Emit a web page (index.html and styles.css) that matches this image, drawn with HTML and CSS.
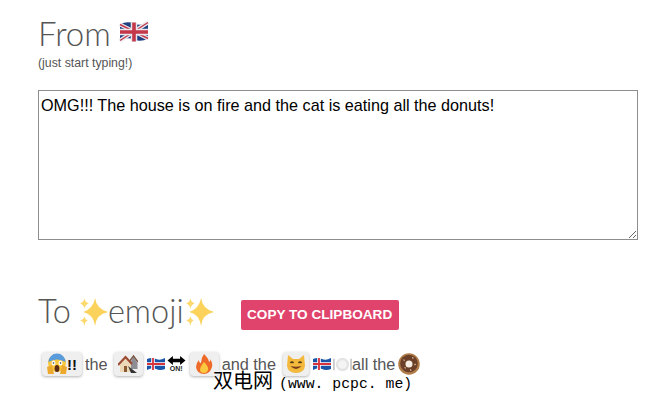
FILE: index.html
```html
<!DOCTYPE html>
<html lang="en">
<head>
  <meta charset="UTF-8" />
  <title>Emoji translate</title>
  <link rel="stylesheet" href="styles.css">
</head>
<body>
  <div class="container">
    <h1 class="from-title">From
      <svg class="flag-uk" viewBox="0 0 30 22"><path d="M1 4 Q8 0 15 3 T29 2 V18 Q22 22 15 19 T1 20 Z" fill="#1f3f7f"/><path d="M1 4 L29 18 M29 2 L1 20" stroke="#e8e8ee" stroke-width="4"/><path d="M1 4 L29 18 M29 2 L1 20" stroke="#c5384a" stroke-width="1.4"/><path d="M15 2 V21 M1 11.5 H29" stroke="#e8e8ee" stroke-width="6.5"/><path d="M15 2 V21 M1 11.5 H29" stroke="#c5384a" stroke-width="3.6"/></svg>
    </h1>
    <p class="hint">(just start typing!)</p>
    <textarea class="source">OMG!!! The house is on fire and the cat is eating all the donuts!</textarea>

    <div class="to-row">
      <h2 class="to-title">To<svg class="sparkle sparkle-first" viewBox="0 0 28 28"><use href="#sparkles"/></svg>emoji<svg class="sparkle" viewBox="0 0 28 28"><use href="#sparkles"/></svg></h2>
      <button class="copy-button">COPY TO CLIPBOARD</button>
    </div>

    <div class="output">
      <span class="key key-scream">
        <svg class="emoji-scream" viewBox="0 0 20 22"><circle cx="10" cy="10" r="9" fill="#f8c93e"/><path d="M1.500 9 A8.500 8.500 0 0 1 18.500 9 Q10 4 1.500 9Z" fill="#5a9bdc"/><ellipse cx="6.500" cy="10" rx="2" ry="2.600" fill="#fff"/><ellipse cx="13.500" cy="10" rx="2" ry="2.600" fill="#fff"/><circle cx="6.500" cy="10" r=".8" fill="#333"/><circle cx="13.500" cy="10" r=".8" fill="#333"/><ellipse cx="10" cy="15.500" rx="2.400" ry="3.500" fill="#5b2b16"/><path d="M0 14 L5 12 L7 21 L1 21Z M20 14 L15 12 L13 21 L19 21Z" fill="#eda92e"/></svg><b class="bangs">!!</b>
      </span>
      <span class="word word-the">the</span>
      <span class="key key-house">
        <svg class="emoji" viewBox="0 0 20 20"><path d="M12 9 L15.500 3 L19.500 9 V15 H12Z" fill="#8d8d96"/><path d="M11 8 L15.500 2 L20 8" fill="none" stroke="#7a5a4a" stroke-width="1.600"/><path d="M2 10 L8 4 L13 10 V18 H2Z" fill="#ecd9b8"/><path d="M0 11 L7.500 3 L14 10" fill="none" stroke="#9c4a32" stroke-width="2.200"/><rect x="6" y="12" width="3" height="6" fill="#8a5a32"/><path d="M10 12 L19 19 H13Z" fill="#333"/></svg>
      </span>
      <svg class="flag" viewBox="1 0 18 14"><path d="M1 2 Q6 0 10 2 T19 1 V12 Q14 14 10 12 T1 13Z" fill="#1a55a8"/><path d="M7 1 V13 M1 7 H19" stroke="#fff" stroke-width="3.600"/><path d="M7 1 V13 M1 7 H19" stroke="#d8323c" stroke-width="1.800"/></svg>
      <span class="on-arrow"><svg class="arrow" viewBox="0 0 20 10"><path d="M0 5 L6 0 V3 H14 V0 L20 5 L14 10 V7 H6 V10Z" fill="#000"/></svg><span class="on-text">ON!</span></span>
      <span class="key key-fire">
        <svg class="emoji" viewBox="0 0 20 20"><path d="M10 0 Q15 5 15 8 Q17 7 16 5 Q19 9 18 13 Q16 20 10 20 Q3 20 2 13 Q2 9 5 6 Q5 9 7 9 Q7 4 10 0Z" fill="#ee6a28"/><path d="M10 8 Q15 13 14 16 Q13 19 10 19 Q6 19 6 16 Q6 13 10 8Z" fill="#fbc93f"/></svg>
      </span>
      <span class="word word-and">and the</span>
      <span class="key key-cat">
        <svg class="emoji" viewBox="0 0 20 20"><path d="M2 1 L7 5 H13 L18 1 L19 12 Q18 19 10 19 Q2 19 1 12Z" fill="#f2b93c"/><path d="M4.500 9 Q6 7 7.500 9 M12.500 9 Q14 7 15.500 9" fill="none" stroke="#4a3216" stroke-width="1.400"/><path d="M4.500 12 Q10 18 15.500 12 Q10 13.500 4.500 12Z" fill="#7a3a1c"/></svg>
      </span>
      <svg class="flag" viewBox="1 0 18 14"><path d="M1 2 Q6 0 10 2 T19 1 V12 Q14 14 10 12 T1 13Z" fill="#1a55a8"/><path d="M7 1 V13 M1 7 H19" stroke="#fff" stroke-width="3.600"/><path d="M7 1 V13 M1 7 H19" stroke="#d8323c" stroke-width="1.800"/></svg>
      <svg class="emoji-plate" viewBox="0 0 20 20"><path d="M1 4 V16 M19 4 V16" stroke="#aaa" stroke-width="1.200"/><circle cx="10" cy="10" r="7" fill="#e4e4e4"/><circle cx="10" cy="10" r="4.500" fill="#f4f4f4"/></svg>
      <span class="word">all the</span>
      <svg class="emoji-donut" viewBox="0 0 20 20"><circle cx="10" cy="10" r="9.800" fill="#b07c48"/><circle cx="10" cy="9.500" r="8" fill="#6a4028"/><circle cx="10" cy="10" r="3.200" fill="#f6eee2"/><path d="M5 6 L6 7 M13 4 L14 5 M15 11 L16 10 M6 13 L7 14 M11 15 L12 16" stroke="#e8c8a0" stroke-width="1"/></svg>
    </div>
  </div>

  <div class="watermark">双电网<span class="watermark-url">(www. pcpc. me)</span></div>

  <svg class="defs" width="0" height="0">
    <symbol id="sparkles" viewBox="0 0 28 28">
      <path d="M16 1 Q17 11 28 14 Q17 16 16 27 Q14 16 5 14 Q14 11 16 1Z" fill="#fbd35c"/>
      <path d="M6 1 Q6.500 5 10 6 Q6.500 7 6 11 Q5.500 7 2 6 Q5.500 5 6 1Z" fill="#fcd96f"/>
      <path d="M6 18 Q6.500 21 9 22 Q6.500 23 6 27 Q5.500 23 2 22 Q5.500 21 6 18Z" fill="#fcd96f"/>
    </symbol>
  </svg>
</body>
</html>
```

FILE: styles.css
```css
html, body {
  height: 404px;
  overflow: hidden;
}
body {
  margin: 0;
  padding: 0;
  font-family: "Lato", "Liberation Sans", sans-serif;
  background: #fff;
  color: #555;
  position: relative;
}
.container {
  width: 600px;
  padding: 11px 0 0 38px;
}
.from-title {
  margin: 0 0 1px;
  font-size: 33px;
  line-height: 44px;
  font-weight: 300;
  color: #555;
  display: flex;
  align-items: center;
  gap: 8px;
}
.flag-uk {
  width: 30px;
  height: 23px;
  margin-bottom: 3px;
}
.hint {
  margin: 0;
  font-family: "Liberation Sans", sans-serif;
  font-size: 12.3px;
  line-height: 14px;
  color: #555;
}
.source {
  display: block;
  box-sizing: border-box;
  width: 600px;
  height: 150px;
  margin: 20px 0 0;
  padding: 5px 2px 2px;
  border: 1px solid #8e8e8e;
  font-family: "Liberation Sans", sans-serif;
  font-size: 16.2px;
  line-height: 18px;
  color: #000;
  outline: none;
}
.to-row {
  display: flex;
  align-items: center;
  gap: 27px;
  margin-top: 50px;
}
.to-title {
  margin: 0;
  font-size: 32.5px;
  line-height: 42px;
  font-weight: 300;
  color: #555;
}
.sparkle {
  width: 30px;
  height: 30px;
  vertical-align: -4px;
}
.sparkle-first {
  margin-left: 7px;
}
.copy-button {
  width: 158px;
  height: 30px;
  margin-top: 7px;
  padding: 0;
  border: none;
  border-radius: 2px;
  background: #e0446c;
  color: #fff;
  font-family: "Liberation Sans", sans-serif;
  font-size: 13.6px;
  font-weight: 700;
}
.output {
  display: flex;
  align-items: center;
  margin-top: 18px;
  padding-left: 4px;
  height: 28px;
  font-family: "Liberation Sans", sans-serif;
  font-size: 16.3px;
  color: #555;
}
.key {
  display: flex;
  align-items: center;
  justify-content: center;
  height: 24px;
  width: 29px;
  background: #efefef;
  border-radius: 4px;
  box-shadow: 0 1px 3px rgba(0, 0, 0, 0.3);
}
.key-scream {
  width: 40px;
}
.key-house {
  margin-left: 6px;
}
.key-fire {
  margin-left: 4px;
}
.key-cat {
  width: 26px;
  margin-left: 7px;
}
.emoji {
  width: 20px;
  height: 20px;
}
.emoji-scream {
  width: 20px;
  height: 22px;
}
.bangs {
  color: #111;
  font-size: 15px;
}
.word-the {
  margin-left: 3px;
}
.word-and {
  margin-left: 3px;
}
.flag {
  width: 18px;
  height: 14px;
  margin-left: 4px;
}
.on-arrow {
  display: flex;
  flex-direction: column;
  align-items: center;
  width: 19px;
  margin-left: 2px;
}
.arrow {
  width: 19px;
  height: 9px;
}
.on-text {
  font-size: 7px;
  line-height: 8px;
  font-weight: 700;
  color: #222;
}
.emoji-plate {
  width: 19px;
  height: 19px;
  margin-left: 2px;
}
.emoji-donut {
  width: 22px;
  height: 22px;
  margin-left: 3px;
}
.watermark {
  position: absolute;
  left: 213px;
  top: 367px;
  font-family: "Noto Sans CJK SC", "DejaVu Sans", sans-serif;
  font-size: 20px;
  line-height: 26px;
  color: #000;
  text-shadow: 0 0 2px #fff, 0 0 2px #fff;
}
.watermark-url {
  font-family: "Liberation Mono", monospace;
  font-size: 14.8px;
  margin-left: 6px;
}
.defs {
  position: absolute;
}
```
